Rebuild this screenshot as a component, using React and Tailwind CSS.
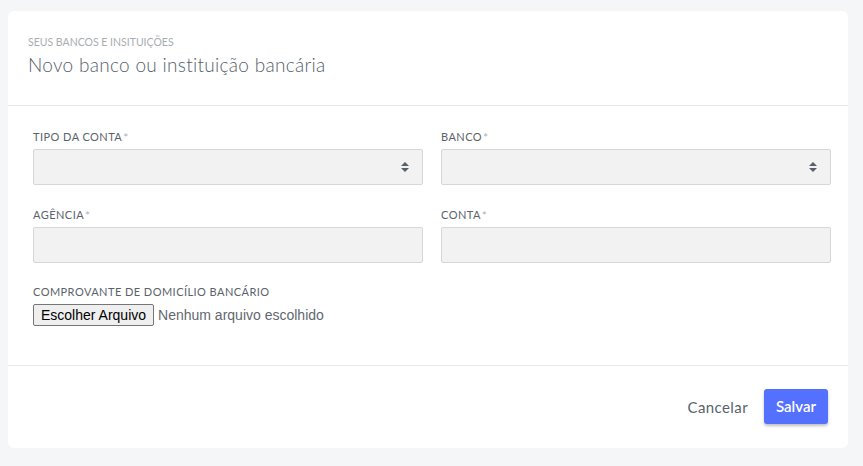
import React from "react";

function Label({ children, required }) {
  return (
    <label className="flex items-center text-[11px] leading-[14px] tracking-[0.45px] text-[#5a636c] uppercase mb-[5px]">
      {children}
      {required && <span className="text-[#aeb3b8] ml-[1px] text-[12px] leading-none mt-[2px]">*</span>}
    </label>
  );
}

function SelectBox() {
  return (
    <div className="h-[36px] bg-[#f2f2f2] border border-[#d5d7d9] rounded-[2px] flex items-center justify-end pr-[12px]">
      <svg width="10" height="14" viewBox="0 0 10 14">
        <path d="M1 6 L5 2 L9 6 Z" fill="#58616a" />
        <path d="M1 8 L5 12 L9 8 Z" fill="#58616a" />
      </svg>
    </div>
  );
}

function InputBox() {
  return <div className="h-[36px] bg-[#f2f2f2] border border-[#d5d7d9] rounded-[2px]" />;
}

export default function App() {
  return (
    <div className="min-h-[466px] bg-[#f5f6f8] pt-[11px] px-[8px] pb-[19px] font-['Lato','Open_Sans',sans-serif]">
      <div className="w-[840px] bg-white rounded-[6px]">
        <div className="px-[20px] pt-[25px] h-[95px] border-b border-[#e6e8ea]">
          <div className="text-[10.5px] leading-[12px] text-[#a9adb1] tracking-[0px]">SEUS BANCOS E INSITUIÇÕES</div>
          <h1 className="mt-[5px] text-[19px] leading-[24px] font-light text-[#55606a] tracking-[0.3px]">
            Novo banco ou instituição bancária
          </h1>
        </div>

        <div className="pl-[25px] pr-[17px] pt-[24px] pb-[39px] border-b border-[#e6e8ea]">
          <div className="grid grid-cols-2 gap-x-[18px] gap-y-[23px]">
            <div>
              <Label required>Tipo da conta</Label>
              <SelectBox />
            </div>
            <div>
              <Label required>Banco</Label>
              <SelectBox />
            </div>
            <div>
              <Label required>Agência</Label>
              <InputBox />
            </div>
            <div>
              <Label required>Conta</Label>
              <InputBox />
            </div>
          </div>

          <div className="mt-[22px]">
            <Label>Comprovante de domicílio bancário</Label>
            <div className="flex items-center font-['Liberation_Sans',Arial,sans-serif]">
              <button className="h-[22px] px-[7px] bg-[#efefef] border border-[#767676] rounded-[2px] text-[14px] text-black leading-none">
                Escolher Arquivo
              </button>
              <span className="ml-[4px] text-[14px] text-[#5f6870]">Nenhum arquivo escolhido</span>
            </div>
          </div>
        </div>

        <div className="h-[82px] flex items-center justify-end pr-[20px] gap-[15px]">
          <button className="text-[15px] text-[#5a636c] px-[1px] tracking-[0.4px]">Cancelar</button>
          <button className="h-[35px] w-[64px] -mt-[2px] bg-[#5470ff] text-white text-[15px] font-semibold rounded-[3px] shadow-[0_2px_3px_rgba(0,0,0,0.25)]">
            Salvar
          </button>
        </div>
      </div>
    </div>
  );
}
